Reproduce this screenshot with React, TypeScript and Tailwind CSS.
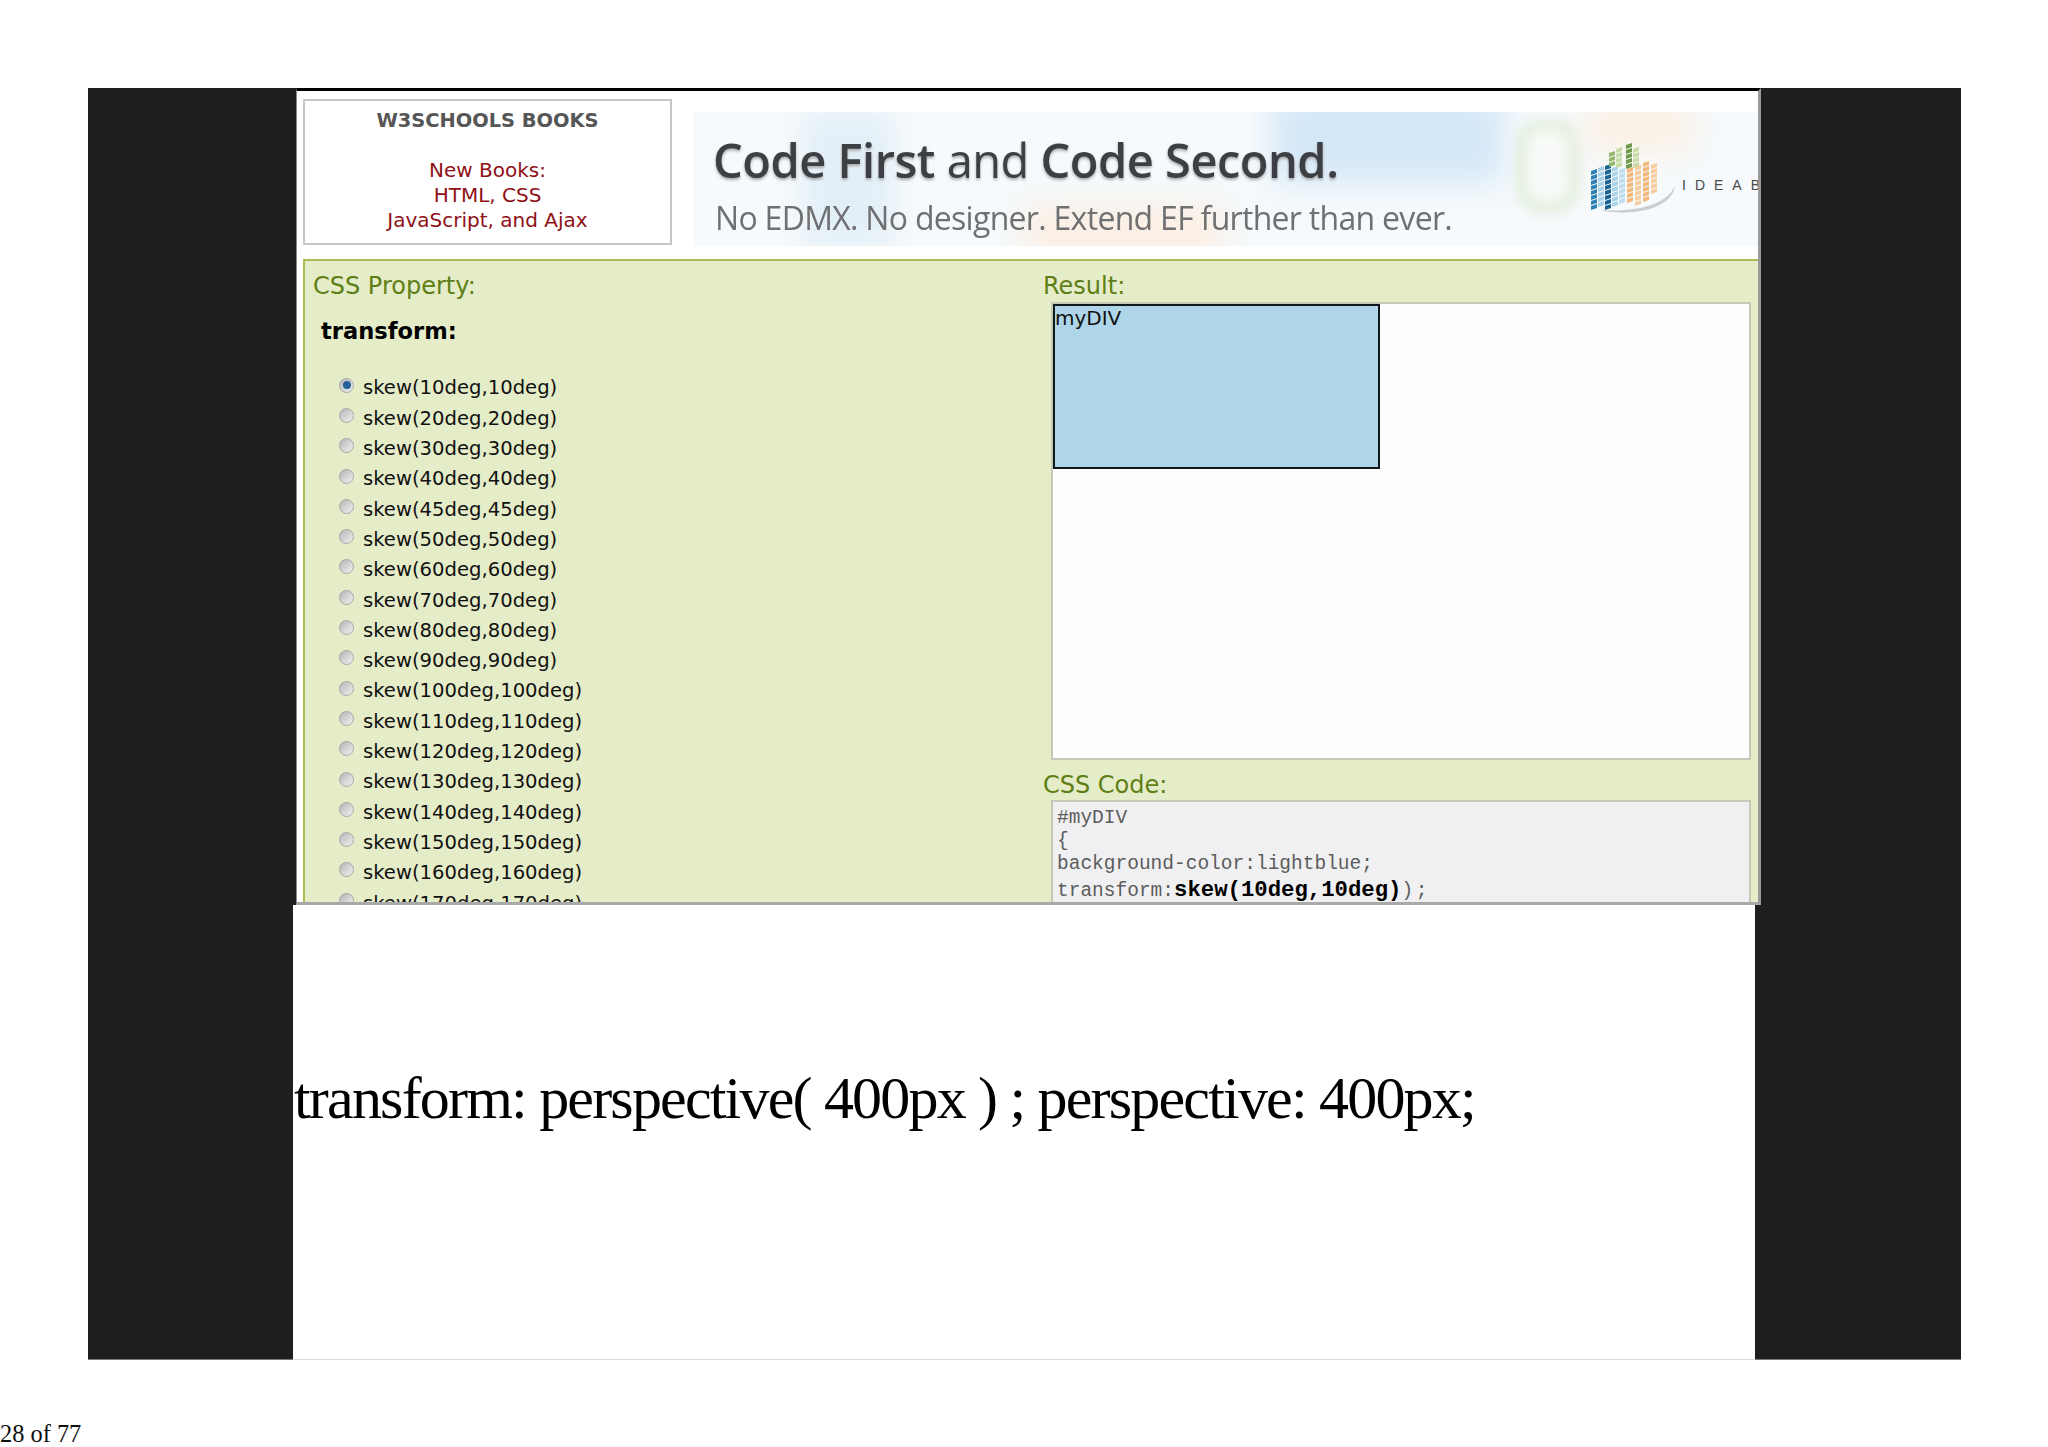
const skews = [10, 20, 30, 40, 45, 50, 60, 70, 80, 90, 100, 110, 120, 130, 140, 150, 160, 170];

function Radio({checked}: {checked: boolean}) {
  return (
    <span className="w-[15px] h-[15px] rounded-full border border-[#a8a8a8] bg-gradient-to-br from-[#b4b4b4] to-[#f4f4f4] grid place-content-center shrink-0 -mt-[6px]">
      {checked && <span className="block w-[8px] h-[8px] rounded-full bg-[#25619a]" />}
    </span>
  );
}

function Logo() {
  const columns = [
    {x: 0, top: 28, rows: 8, color: "#2f7fb0"},
    {x: 7, top: 25, rows: 8, color: "#a9d3ea"},
    {x: 14, top: 23, rows: 9, color: "#1a628f"},
    {x: 21, top: 25, rows: 8, color: "#a9d3ea"},
    {x: 28, top: 27, rows: 7, color: "#bcdcf0"},
    {x: 18, top: 10, rows: 3, color: "#93b86d"},
    {x: 25, top: 6, rows: 4, color: "#c6dca6"},
    {x: 35, top: 2, rows: 5, color: "#6f9a4c"},
    {x: 42, top: 6, rows: 4, color: "#c9dca8"},
    {x: 36, top: 26, rows: 7, color: "#f2b77a"},
    {x: 44, top: 24, rows: 8, color: "#f7cda0"},
    {x: 52, top: 20, rows: 8, color: "#f2b77a"},
    {x: 60, top: 22, rows: 6, color: "#f7cda0"},
  ];
  return (
    <svg width="86" height="72" viewBox="0 0 86 72" className="block">
      {columns.map((c) =>
        Array.from({length: c.rows}, (_, i) => (
          <path
            key={`${c.x}-${i}`}
            d={`M${c.x} ${c.top + i * 5 + 2}l6 -2v4l-6 2z`}
            fill={c.color}
          />
        )),
      )}
      <path d="M8 69c30 2 66 -2 76 -24c-4 26 -50 30 -76 24z" fill="#c9ccd0" />
    </svg>
  );
}

function Banner() {
  return (
    <div className="relative ml-[21px] mt-[21px] h-[134px] flex-1 overflow-hidden bg-[#f6fafc]">
      <div className="absolute left-[110px] top-0 w-[90px] h-[134px] bg-[#e3eff7] blur-md" />
      <div className="absolute left-[330px] -bottom-[10px] w-[200px] h-[50px] bg-[#fbeee2] blur-lg" />
      <div className="absolute left-[580px] -top-[20px] w-[230px] h-[90px] bg-[#d4e7f7] blur-lg" />
      <div className="absolute left-[824px] top-[8px] w-[62px] h-[92px] rounded-[24px] border-[10px] border-[#e0edd8] bg-[#f8fbf8] blur-[6px]" />
      <div className="absolute left-[890px] -top-[10px] w-[110px] h-[50px] bg-[#fbf0e4] blur-lg" />
      <div className="relative pl-[20px] pt-[18px]">
        <p className="font-['Open_Sans',sans-serif] text-[47px] leading-[60px] text-[#3c3f44] whitespace-nowrap tracking-[-0.5px] [text-shadow:0_2px_3px_#a8a8a8] blur-[0.5px]">
          <span className="font-semibold">Code First</span> and <span className="font-semibold">Code Second.</span>
        </p>
        <p className="font-['Open_Sans',sans-serif] text-[32px] leading-[40px] mt-[8px] ml-[2px] text-[#6f7072] whitespace-nowrap tracking-[-0.7px] blur-[0.3px]">
          No EDMX. No designer. Extend EF further than ever.
        </p>
      </div>
      <div className="absolute left-[898px] top-[29px]">
        <Logo />
      </div>
      <span className="absolute left-[989px] top-[64px] font-['Liberation_Sans',sans-serif] text-[14px] leading-[18px] tracking-[9px] text-[#4a4a4a] whitespace-nowrap">
        IDEAB
      </span>
    </div>
  );
}

function BooksBox() {
  return (
    <div className="mt-[8px] ml-[6px] w-[369px] h-[146px] shrink-0 border-2 border-[#c6c6c6] text-center font-['DejaVu_Sans',sans-serif] pt-[7px]">
      <p className="text-[19.4px] leading-[26px] font-bold text-[#565656]">W3SCHOOLS BOOKS</p>
      <div className="mt-[24px] text-[20px] leading-[25px] text-[#8f1016]">
        <p>New Books:</p>
        <p>HTML, CSS</p>
        <p>JavaScript, and Ajax</p>
      </div>
    </div>
  );
}

function PropertyColumn() {
  return (
    <div className="w-[738px] shrink-0 pl-[8px] pt-[10px] font-['DejaVu_Sans',sans-serif]">
      <h3 className="text-[24px] leading-[30px] text-[#5f7f16]">CSS Property:</h3>
      <h2 className="ml-[8px] mt-[15px] text-[22.6px] leading-[30px] font-bold text-black">transform:</h2>
      <ul className="ml-[26px] mt-[27px]">
        {skews.map((deg, i) => (
          <li key={deg} className="flex items-center gap-[9px] h-[30.3px] text-[19.6px] text-[#111] whitespace-nowrap">
            <Radio checked={i === 0} />
            <span>
              skew({deg}deg,{deg}deg)
            </span>
          </li>
        ))}
      </ul>
    </div>
  );
}

function ResultColumn() {
  return (
    <div className="flex-1 pt-[10px] pr-[7px]">
      <h3 className="font-['DejaVu_Sans',sans-serif] text-[24px] leading-[30px] text-[#5f7f16]">Result:</h3>
      <div className="ml-[8px] mt-[1px] h-[458px] border-2 border-[#c5c9b8] bg-[#fdfefd]">
        <div className="w-[327px] h-[165px] border-2 border-[#10181c] bg-[#aed5e8] font-['DejaVu_Sans',sans-serif] text-[20px] leading-[24px] text-[#111]">
          myDIV
        </div>
      </div>
      <h3 className="mt-[10px] font-['DejaVu_Sans',sans-serif] text-[24px] leading-[30px] text-[#5f7f16]">CSS Code:</h3>
      <div className="ml-[8px] h-[140px] border-2 border-[#c5c9b8] bg-[#f0f0f2] pl-[4px] pt-[5px] font-['Liberation_Mono',monospace] text-[19.5px] text-[#5c5c5c]">
        <p className="leading-[23px] whitespace-nowrap">#myDIV</p>
        <p className="leading-[23px] whitespace-nowrap">{"{"}</p>
        <p className="leading-[23px] whitespace-nowrap">background-color:lightblue;</p>
        <p className="mt-[3px] leading-[23px] whitespace-nowrap">
          transform:<b className="text-black text-[22.3px]">skew(10deg,10deg)</b>
          <span className="tracking-[2.5px]">);</span>
        </p>
      </div>
    </div>
  );
}

export default function App() {
  return (
    <div className="w-[2048px] h-[1447px] bg-white overflow-hidden flex flex-col">
      <section className="mt-[88px] ml-[88px] w-[1873px] h-[1272px] shrink-0 bg-[#1e1e1e] border-b border-[#777]">
        <div className="ml-[208px] w-[1465px] h-[817px] overflow-hidden bg-white border-t-[3px] border-t-black border-r-[3px] border-r-[#9a9a9a] border-b-[3px] border-b-[#a9a9a9] border-l border-l-[#888]">
          <div className="flex h-[168px]">
            <BooksBox />
            <Banner />
          </div>
          <div className="flex ml-[6px] h-[700px] bg-[#e5ecc8] border-t-2 border-l-2 border-[#a9bd55]">
            <PropertyColumn />
            <ResultColumn />
          </div>
        </div>
        <div className="ml-[205px] w-[1462px] h-[455px] bg-white border-b border-[#ddd] pt-[161px] pl-px">
          <p className="font-['Liberation_Serif',serif] text-[60px] leading-[64px] tracking-[-1.8px] text-black whitespace-nowrap">
            transform: perspective( 400px ) ; perspective: 400px;
          </p>
        </div>
      </section>
      <p className="mt-[60px] font-['Liberation_Serif',serif] text-[24.4px] leading-[28px] text-[#111]">28 of 77</p>
    </div>
  );
}
